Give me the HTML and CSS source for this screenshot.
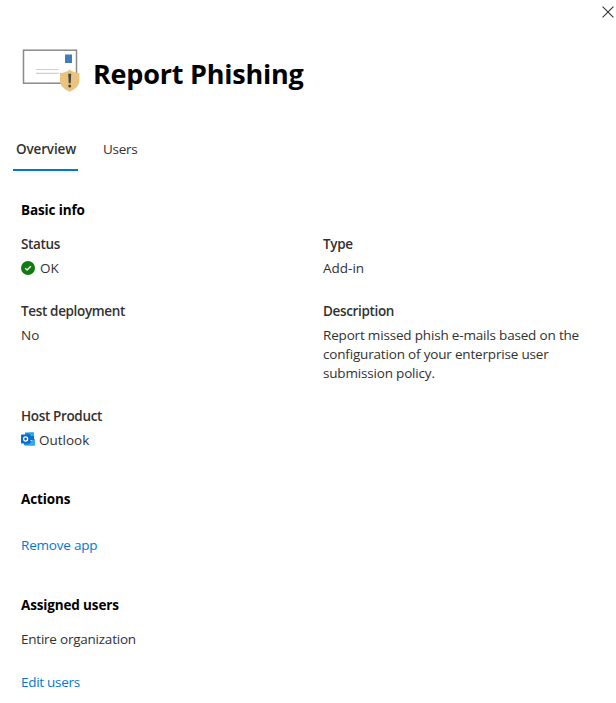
FILE: index.html
```html
<!DOCTYPE html>
<html lang="en">
<head>
<meta charset="utf-8">
<title>Report Phishing</title>
<link rel="stylesheet" href="styles.css">
</head>
<body>
<main class="panel">
  <div class="topbar">
    <button class="close" aria-label="Close">
      <svg width="12" height="12" viewBox="0 0 12 12"><path d="M.6.6l10.8 10.8M11.4.6L.6 11.4" stroke="#333" stroke-width="1.1" fill="none"/></svg>
    </button>
  </div>
  <header class="header">
    <svg class="app-icon" width="58" height="45" viewBox="0 0 58 45">
      <rect x="1.500" y="2.200" width="53" height="33" fill="#fff" stroke="#8a8a8a" stroke-width="1.500"/>
      <rect x="43" y="6.500" width="7" height="8.500" fill="#427ebb"/>
      <path d="M14 21.500h22.500M14 25.300h22.500" stroke="#cfcfcf" stroke-width="1.200"/>
      <path d="M47.700 21.500c2.500 2.300 5.800 3.300 9.700 3.500v7.500c0 5-4.200 9-9.700 11.300C42.200 41.500 38 37.500 38 32.500V25c3.900-.2 7.200-1.200 9.700-3.500z" fill="#eac47c"/>
      <path d="M46.200 25.800h3l-.5 9.400h-2z" fill="#444"/>
      <circle cx="47.700" cy="38" r="1.500" fill="#444"/>
    </svg>
    <h1 class="title">Report Phishing</h1>
  </header>
  <nav class="tabs">
    <a class="tab tab-active">Overview</a>
    <a class="tab">Users</a>
  </nav>
  <div class="content">
    <h2 class="heading">Basic info</h2>
    <dl class="info">
      <div class="field">
        <dt>Status</dt>
        <dd class="with-icon">
          <svg class="ok-icon" width="14" height="14" viewBox="0 0 14 14"><circle cx="7" cy="7" r="7" fill="#107c10"/><path d="M4.200 7.200l1.900 1.800 3.700-3.700" stroke="#fff" stroke-width="1.500" fill="none"/></svg>
          <span>OK</span>
        </dd>
      </div>
      <div class="field">
        <dt>Type</dt>
        <dd>Add-in</dd>
      </div>
      <div class="field">
        <dt>Test deployment</dt>
        <dd>No</dd>
      </div>
      <div class="field">
        <dt>Description</dt>
        <dd class="description">Report missed phish e-mails based on the<br>configuration of your enterprise user<br>submission policy.</dd>
      </div>
      <div class="field">
        <dt>Host Product</dt>
        <dd class="with-icon">
          <svg class="outlook-icon" width="14" height="14" viewBox="0 0 14 14">
            <path d="M4 .5h9V8H4z" fill="#1490df"/><path d="M8.500.5H13V4H8.500z" fill="#28a8ea"/><path d="M8.500 4H13v4H8.500z" fill="#0f6fc5"/>
            <path d="M3 7h5.500l1.500 2 4-2v5.500q0 1-1 1H4q-1 0-1-1z" fill="#1e90e0"/><path d="M14 7v5.500q0 1-1 1H6z" fill="#35a8f1"/>
            <rect y="2.500" width="9.300" height="9" rx=".7" fill="#0a6bc6"/>
            <ellipse cx="4.600" cy="7" rx="2" ry="2.100" fill="none" stroke="#fff" stroke-width="1.300"/>
          </svg>
          <span>Outlook</span>
        </dd>
      </div>
    </dl>
    <section class="section actions">
      <h2 class="heading">Actions</h2>
      <a class="link">Remove app</a>
    </section>
    <section class="section assigned">
      <h2 class="heading">Assigned users</h2>
      <p class="value">Entire organization</p>
      <a class="link">Edit users</a>
    </section>
  </div>
</main>
</body>
</html>
```
FILE: styles.css
```css
* { box-sizing: border-box; }
body {
  margin: 0;
  background: #fff;
  color: #323130;
  font: 13.5px/19px "Open Sans", "Noto Sans", sans-serif;
}
h1, h2, p, dl, dd { margin: 0; }
.panel { height: 703px; overflow: hidden; }
.topbar { display: flex; justify-content: flex-end; height: 48px; padding: 6px 2px 0 0; }
.close { display: block; width: 12px; height: 12px; padding: 0; border: 0; background: none; }
.close svg { display: block; }
.header { display: flex; height: 52px; padding-left: 22px; }
.app-icon { flex: none; }
.title { margin-left: 13px; color: #000; font-size: 27px; line-height: 52px; font-weight: 700; letter-spacing: -.22px; white-space: nowrap; }
.tabs { display: flex; gap: 22px; height: 71px; padding: 28px 0 0 13px; }
.tab { height: 43px; padding: 12px 3px 0; white-space: nowrap; letter-spacing: -.3px; }
.tab-active { width: 65px; border-bottom: 2px solid #0078d4; font-weight: 600; letter-spacing: -.15px; }
.content { padding: 30px 0 0 21px; }
.heading { color: #000; font-size: 13.5px; line-height: 19px; font-weight: 700; letter-spacing: -.14px; }
.info { display: grid; grid-template-columns: 302px 1fr; grid-template-rows: 67px 105px 43px; margin-top: 15px; }
dt { font-weight: 600; margin-bottom: 5px; letter-spacing: -.35px; }
.description { letter-spacing: -.18px; }
.with-icon { display: flex; align-items: center; gap: 5px; }
.ok-icon { margin-top: -1px; }
.outlook-icon { margin: -3px -1px 0 0; }
.actions { margin-top: 40px; }
.actions .link { margin-top: 27px; }
.assigned { margin-top: 41px; }
.value { margin-top: 15px; letter-spacing: -.23px; }
.link { display: block; color: #0078d4; letter-spacing: -.2px; }
.assigned .link { margin-top: 24px; letter-spacing: -.28px; }
```
